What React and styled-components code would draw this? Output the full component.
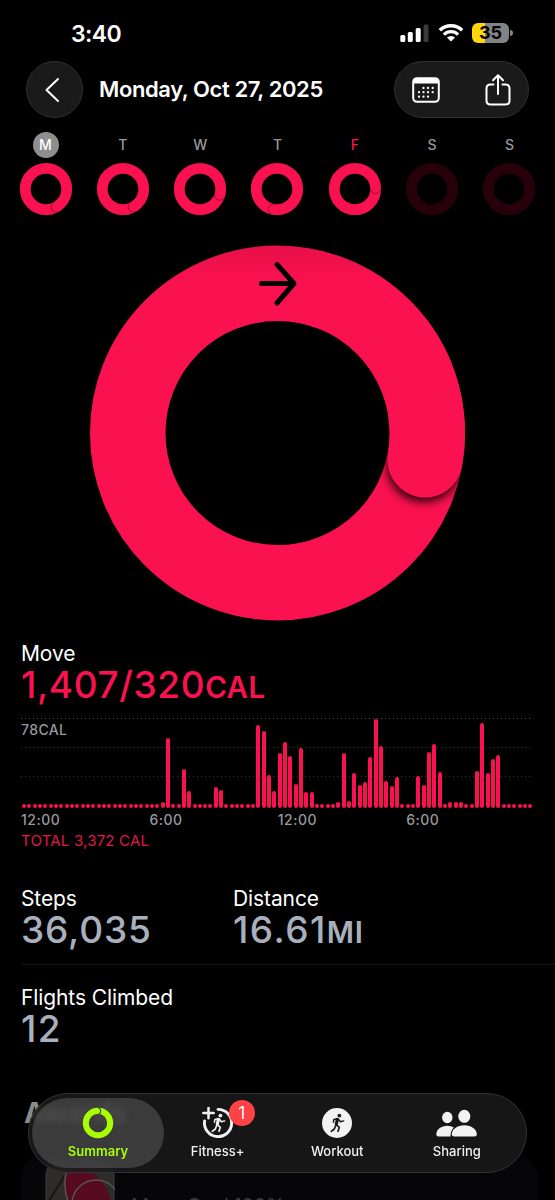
import React from "react";
import styled, { createGlobalStyle, css } from "styled-components";

const PINK = "#fa114f";
const GREY = "#98989d";

const DAYS = [
    { label: "M", state: "selected", cap: 150 },
    { label: "T", cap: 150 },
    { label: "W", cap: 107 },
    { label: "T", cap: 190 },
    { label: "F", state: "today", cap: 88 },
    { label: "S", state: "empty" },
    { label: "S", state: "empty" },
];

// quarter hour bars, heights in px (4 = nothing burned)
const CALORIES = [
    ...Array(26).fill(4),
    6, 70, 4, 4, 39, 17, 4, 4, 4, 4, 21, 18, 4, 4, 4, 4, 4, 4, 83, 77, 33, 17,
    55, 66, 52, 24, 60, 16, 16, 4, 4, 4, 4, 6, 55, 7, 35, 23, 26, 51, 89, 62,
    27, 22, 31, 4, 4, 4, 32, 23, 56, 64, 36, 4, 6, 6, 6, 4, 4, 37, 85, 35, 49,
    53, 4, 4, 4, 4, 4, 4,
];

const pointAt = (deg, r, c) => {
    const a = ((deg - 90) * Math.PI) / 180;
    return [c + r * Math.cos(a), c + r * Math.sin(a)];
};

const SmallRing = ({ state, cap }) => {
    if (state === "empty") {
        return (
            <svg width="54" height="54" viewBox="0 0 54 54">
                <circle cx="27" cy="27" r="20.7" fill="none" stroke="#27000b" strokeWidth="10.8" />
            </svg>
        );
    }
    const [x, y] = pointAt(cap, 20.7, 27);
    return (
        <svg width="54" height="54" viewBox="0 0 54 54">
            <circle cx="27" cy="27" r="20.7" fill="none" stroke={PINK} strokeWidth="10.8" />
            <g transform={`translate(${x} ${y}) rotate(${cap})`}>
                <path d="M0 -5.2A5.2 5.2 0 0 1 0 5.2" fill="none" stroke="#8d0a30" strokeWidth="0.9" opacity="0.85" />
            </g>
        </svg>
    );
};

const BigRing = () => {
    const [x, y] = pointAt(100.4, 150, 190);
    return (
        <svg width="381" height="380" viewBox="-0.5 0 381 380">
            <defs>
                <clipPath id="band">
                    <path clipRule="evenodd" d="M190 2.5a187.5 187.5 0 1 0 .01 0ZM190 78a112 112 0 1 0 .01 0Z" />
                </clipPath>
                <filter id="soft" x="-50%" y="-50%" width="200%" height="200%">
                    <feGaussianBlur stdDeviation="5" />
                </filter>
                <linearGradient id="shade" x1="0" y1="0" x2="0" y2="1">
                    <stop offset="0" stopColor="#000" stopOpacity="0.08" />
                    <stop offset="1" stopColor="#000" stopOpacity="0" />
                </linearGradient>
            </defs>
            <circle cx="190" cy="190" r="149.75" fill="none" stroke={PINK} strokeWidth="75.5" />
            <g clipPath="url(#band)">
                <circle cx={x - 1} cy={y + 5} r="37" fill="#000" opacity="0.85" filter="url(#soft)" />
                <rect x="90" y="2" width="200" height="34" fill="url(#shade)" />
            </g>
            <path
                d={`M310 100A150 150 0 0 1 ${x} ${y}`}
                fill="none"
                stroke={PINK}
                strokeWidth="75"
                strokeLinecap="round"
            />
            <path d="M174 40.5H206M189.5 21.500L206.5 40.5L189.5 60" fill="none" stroke="#000" strokeWidth="5" strokeLinecap="round" strokeLinejoin="round" />
        </svg>
    );
};

const SignalIcon = () => (
    <svg width="29" height="19" viewBox="0 0 29 19">
        <rect x="0.3" y="11" width="5" height="7" rx="1.5" fill="#fff" />
        <rect x="7.8" y="8" width="5" height="10" rx="1.5" fill="#fff" />
        <rect x="15.7" y="4" width="5" height="14" rx="1.5" fill="#fff" />
        <rect x="23.5" y="0.5" width="5" height="17.5" rx="1.5" fill="#3b3b3b" />
    </svg>
);

const WifiIcon = () => (
    <svg width="26" height="20" viewBox="0 0 26 20">
        <g fill="none" stroke="#fff" strokeWidth="3.3">
            <path d="M1.8 7.3A16 16 0 0 1 24.2 7.3" />
            <path d="M5.9 11.6A10.2 10.2 0 0 1 20.1 11.6" />
        </g>
        <path d="M13 18.6L8.9 14.6A5.9 5.9 0 0 1 17.1 14.6Z" fill="#fff" />
    </svg>
);

const CalendarIcon = () => (
    <svg width="30" height="28" viewBox="0 0 30 28">
        <rect x="2.2" y="2.2" width="25.6" height="23.6" rx="3.8" fill="none" stroke="#fff" strokeWidth="2" />
        <path d="M2 7.5V5.5Q2 2 5.5 2H24.5Q28 2 28 5.5V7.5Z" fill="#fff" />
        <g fill="#fff">
            {[
                [12.5, 12], [17, 12], [21.7, 12],
                [8, 16.2], [12.5, 16.2], [17, 16.2], [21.7, 16.2],
                [8, 20.7], [12.5, 20.7], [17, 20.7],
            ].map(([cx, cy]) => (
                <circle key={`${cx}-${cy}`} cx={cx} cy={cy} r="1.15" />
            ))}
        </g>
    </svg>
);

const ShareIcon = () => (
    <svg width="28" height="34" viewBox="0 0 28 34">
        <g fill="none" stroke="#fff" strokeWidth="2" strokeLinecap="round" strokeLinejoin="round">
            <path d="M9.5 11.5H6.5Q2.5 11.5 2.5 15.5V27.5Q2.5 31.5 6.5 31.5H21.5Q25.5 31.5 25.5 27.5V15.5Q25.5 11.5 21.5 11.5H18.5" />
            <path d="M14 21V2.5M9 7.2L14 2.2L19 7.2" />
        </g>
    </svg>
);

const Runner = ({ color }) => (
    <g fill="none" stroke={color} strokeLinecap="round" strokeLinejoin="round">
        <circle cx="17.4" cy="7.6" r="1.9" fill={color} stroke="none" />
        <path d="M15.4 11.5L14.3 16.2" strokeWidth="3.2" />
        <path d="M15.2 10.7L11.9 11.4L11.4 14.2M16.3 11L18.4 13.8L21.7 12.9" strokeWidth="1.5" />
        <path d="M14.5 16.8L17.3 19.3L16 23.2M13.6 17.8L12.3 21L9.3 23.3" strokeWidth="1.7" />
    </g>
);

const SummaryIcon = () => (
    <svg width="32" height="32" viewBox="0 0 32 32">
        <circle cx="16" cy="16" r="12.2" fill="none" stroke="#a8ff04" strokeWidth="6" />
        <path d="M16.5 0.6Q20.5 3.5 17.3 7" fill="none" stroke="#3d3d3d" strokeWidth="1.2" />
    </svg>
);

const FitnessIcon = () => (
    <svg width="32" height="32" viewBox="0 0 32 32">
        <path d="M16 2.4A13.6 13.6 0 1 1 2.6 14" fill="none" stroke="#f2f2f2" strokeWidth="2.9" strokeLinecap="round" />
        <path d="M6.5 0.8V11.2M1.3 6H11.7" stroke="#f2f2f2" strokeWidth="2.5" strokeLinecap="round" />
        <g transform="translate(1 1)">
            <Runner color="#f2f2f2" />
        </g>
    </svg>
);

const WorkoutIcon = () => (
    <svg width="32" height="32" viewBox="0 0 32 32">
        <circle cx="16" cy="16" r="15" fill="#f2f2f2" />
        <g transform="translate(1 1)">
            <Runner color="#1b1b1b" />
        </g>
    </svg>
);

const SharingIcon = () => (
    <svg width="42" height="32" viewBox="0.7 0 42 32">
        <g fill="#f2f2f2">
            <ellipse cx="12" cy="10.5" rx="5.2" ry="5.8" />
            <path d="M1 27.5C1 22.5 6 18.7 12 18.7Q16 18.7 18.5 20.5Q15.2 23.6 15.2 29.5H3Q1 29.5 1 27.5Z" />
            <ellipse cx="29" cy="9.3" rx="6" ry="6.5" />
            <path d="M16.5 27.2C16.5 22.2 22 18.2 29 18.2C36 18.2 41.5 22.2 41.5 27.2Q41.5 29.5 39.2 29.5H18.8Q16.5 29.5 16.5 27.2Z" />
        </g>
    </svg>
);

const AwardBadge = () => (
    <svg width="70" height="50" viewBox="0 0 70 50">
        <rect x="1" y="1" width="68" height="68" rx="12" fill="#2d2c29" stroke="#3d3c3a" />
        <path d="M21 14Q21 8 31 8H39Q63 16 68 50H27Q18 32 21 14Z" fill="#560b20" />
        <path d="M4 40L20 14" fill="none" stroke="#171615" strokeWidth="2" />
        <path d="M21 12Q17 30 27 50" fill="none" stroke="#59534f" strokeWidth="1.5" />
        <circle cx="51" cy="43" r="24" fill="none" stroke="#59534f" strokeWidth="1.5" />
    </svg>
);

const TABS = [
    { label: "Summary", Icon: SummaryIcon, active: true },
    { label: "Fitness+", Icon: FitnessIcon, badge: "1" },
    { label: "Workout", Icon: WorkoutIcon },
    { label: "Sharing", Icon: SharingIcon },
];

const App = () => {
    return (
        <Screen>
            <GlobalStyle />
            <StatusBar>
                <Clock>3:40</Clock>
                <StatusIcons>
                    <SignalIcon />
                    <WifiIcon />
                    <Battery>35</Battery>
                </StatusIcons>
            </StatusBar>

            <Header>
                <BackButton>
                    <svg width="16" height="26" viewBox="0 0 16 26">
                        <path d="M14 2L2.5 13L14 24" fill="none" stroke="#fff" strokeWidth="2" strokeLinecap="round" strokeLinejoin="round" />
                    </svg>
                </BackButton>
                <Title>Monday, Oct 27, 2025</Title>
                <Actions>
                    <CalendarIcon />
                    <ShareIcon />
                </Actions>
            </Header>

            <Week>
                {DAYS.map((day, i) => (
                    <Day key={i}>
                        <DayLabel $state={day.state}>{day.label}</DayLabel>
                        <SmallRing {...day} />
                    </Day>
                ))}
            </Week>

            <RingArea>
                <BigRing />
            </RingArea>

            <Move>
                <Label>Move</Label>
                <Value $color={PINK} $spacing="0.6px">
                    1,407/320<Unit $spacing="0.4px">CAL</Unit>
                </Value>
                <Chart>
                    <GridLine $bright>
                        <Peak>78CAL</Peak>
                    </GridLine>
                    <GridLine />
                    <GridLine />
                    <Bars>
                        {CALORIES.map((h, i) => (
                            <Bar key={i} style={{ height: h }} />
                        ))}
                    </Bars>
                </Chart>
                <Hours>
                    <span>12:00</span>
                    <span>6:00</span>
                    <span>12:00</span>
                    <span>6:00</span>
                </Hours>
                <Total>TOTAL 3,372 CAL</Total>
            </Move>

            <StatsRow>
                <Stat>
                    <Label>Steps</Label>
                    <Value $spacing="0.9px">36,035</Value>
                </Stat>
                <Stat>
                    <Label>Distance</Label>
                    <Value $spacing="1.5px">
                        16.61<Unit $spacing="0.8px">MI</Unit>
                    </Value>
                </Stat>
            </StatsRow>
            <StatsRow $last>
                <Stat>
                    <Label>Flights Climbed</Label>
                    <Value $spacing="1.5px">12</Value>
                </Stat>
            </StatsRow>

            <AwardsTitle>Awards</AwardsTitle>
            <AwardCard>
                <AwardBadge />
                <AwardName>Move Goal 100%</AwardName>
            </AwardCard>

            <TabBar>
                {TABS.map(({ label, Icon, active, badge }) => (
                    <Tab key={label} $active={active}>
                        <Icon />
                        <TabLabel $active={active}>{label}</TabLabel>
                        {badge && <Badge>{badge}</Badge>}
                    </Tab>
                ))}
            </TabBar>
        </Screen>
    );
};

const GlobalStyle = createGlobalStyle`
  body {
    margin: 0;
    background: #000;
  }

  * {
    box-sizing: border-box;
  }

  svg {
    display: block;
    flex-shrink: 0;
  }
`;

const Screen = styled.div`
  position: relative;
  display: flex;
  flex-direction: column;
  width: 555px;
  height: 1200px;
  overflow: hidden;
  background: #000;
  color: #fff;
  font-family: Inter, "Liberation Sans", sans-serif;
  white-space: nowrap;
`;

const StatusBar = styled.div`
  display: flex;
  flex-shrink: 0;
  justify-content: space-between;
  height: 61px;
  padding: 19px 42px 0 71px;
`;

const Clock = styled.div`
  font-size: 23px;
  line-height: 30px;
  font-weight: 600;
  letter-spacing: -0.6px;
`;

const StatusIcons = styled.div`
  display: flex;
  align-items: center;
  height: 28px;
  gap: 8.5px;
`;

const Battery = styled.div`
  position: relative;
  width: 37px;
  height: 20px;
  margin-right: 4px;
  border-radius: 6px;
  background: linear-gradient(90deg, #ffd60a 13px, #838386 13px);
  color: #000;
  font-size: 18px;
  line-height: 20px;
  font-weight: 700;
  text-align: center;

  &::after {
    content: "";
    position: absolute;
    left: 38px;
    top: 7px;
    width: 2.5px;
    height: 6px;
    border-radius: 0 3px 3px 0;
    background: #838386;
  }
`;

const Header = styled.div`
  display: flex;
  flex-shrink: 0;
  align-items: center;
  height: 57px;
  padding: 0 26px;
`;

const glass = css`
  background: #1a1a1a;
  border: 1px solid #303030;
`;

const BackButton = styled.div`
  ${glass}
  display: flex;
  align-items: center;
  justify-content: center;
  width: 57px;
  height: 57px;
  padding-right: 5px;
  border-radius: 50%;
`;

const Title = styled.div`
  margin-left: 16px;
  padding-bottom: 2px;
  font-size: 22px;
  line-height: 28px;
  font-weight: 600;
  letter-spacing: -0.4px;
`;

const Actions = styled.div`
  ${glass}
  display: flex;
  align-items: center;
  justify-content: space-between;
  width: 135px;
  height: 57px;
  margin-left: auto;
  padding: 0 16px;
  border-radius: 29px;
`;

const Week = styled.div`
  display: flex;
  flex-shrink: 0;
  justify-content: space-between;
  height: 99px;
  padding: 14px 18.5px 0;
`;

const Day = styled.div`
  display: flex;
  flex-direction: column;
  align-items: center;
  gap: 4px;
  width: 54px;
`;

const DayLabel = styled.div`
  width: 26px;
  height: 26px;
  border-radius: 50%;
  background: ${({ $state }) => ($state === "selected" ? "#8e8e8e" : "none")};
  color: ${({ $state }) => ($state === "selected" ? "#fff" : $state === "today" ? PINK : GREY)};
  font-size: 14px;
  line-height: 26px;
  font-weight: 500;
  text-align: center;
`;

const RingArea = styled.div`
  display: flex;
  flex-shrink: 0;
  justify-content: center;
  padding-top: 26px;
`;

const Move = styled.section`
  display: flex;
  flex-shrink: 0;
  flex-direction: column;
  height: 243px;
  padding: 18px 21px 0;
`;

const Label = styled.div`
  font-size: 21px;
  line-height: 26px;
  letter-spacing: -0.1px;
`;

const Value = styled.div`
  color: ${({ $color }) => $color || "#a9b0bd"};
  font-size: 37px;
  line-height: 36px;
  font-weight: 500;
  letter-spacing: ${({ $spacing }) => $spacing};
`;

const Unit = styled.span`
  font-size: 29.5px;
  font-weight: 600;
  letter-spacing: ${({ $spacing }) => $spacing};
`;

const Chart = styled.div`
  position: relative;
  height: 94px;
  margin: 13px 1px 0 0;
`;

const GridLine = styled.div`
  height: 29px;
  background: repeating-linear-gradient(90deg, ${({ $bright }) => ($bright ? "#555" : "#363636")} 0 1.5px, transparent 1.5px 4px) top / 100% 1px no-repeat;
`;

const Peak = styled.div`
  padding-top: 4px;
  color: ${GREY};
  font-size: 14px;
  line-height: 16px;
  font-weight: 500;
  letter-spacing: 0.4px;
`;

const Bars = styled.div`
  position: absolute;
  inset: 0;
  display: flex;
  align-items: flex-end;
  justify-content: space-between;
  padding: 0 0 4px 1px;
`;

const Bar = styled.div`
  width: 4px;
  border-radius: 2px;
  background: ${PINK};
`;

const Hours = styled.div`
  display: grid;
  grid-template-columns: repeat(4, 128.4px);
  color: ${GREY};
  font-size: 14px;
  line-height: 16px;
  font-weight: 500;
  letter-spacing: 0.5px;
`;

const Total = styled.div`
  margin-top: 4px;
  color: #e0164b;
  font-size: 15px;
  line-height: 18px;
  letter-spacing: 0.2px;
`;

const StatsRow = styled.div`
  display: grid;
  grid-template-columns: 212px 1fr;
  flex-shrink: 0;
  height: ${({ $last }) => ($last ? "134px" : "99px")};
  margin-left: 21px;
  padding-top: 20px;
  border-bottom: ${({ $last }) => ($last ? "none" : "1px solid #161616")};
`;

const Stat = styled.div``;

const AwardsTitle = styled.div`
  flex-shrink: 0;
  height: 54px;
  padding-left: 24px;
  color: #8a8a8a;
  font-size: 28px;
  line-height: 28px;
  font-weight: 700;
`;

const AwardCard = styled.div`
  display: flex;
  flex-shrink: 0;
  gap: 16px;
  height: 80px;
  margin: 0 17px 0 21px;
  padding: 8px 24px;
  border-radius: 26px;
  background: #060608;
`;

const AwardName = styled.div`
  padding-top: 32px;
  color: #3c3c3c;
  font-size: 20px;
  line-height: 26px;
  letter-spacing: -0.4px;
`;

const TabBar = styled.nav`
  position: absolute;
  left: 28px;
  top: 1093px;
  display: flex;
  width: 499px;
  height: 80px;
  padding: 4px 3px;
  border: 1px solid #333;
  border-radius: 40px;
  background: rgba(27, 27, 27, 0.82);
  backdrop-filter: blur(3px);
`;

const Tab = styled.div`
  position: relative;
  display: flex;
  flex-direction: column;
  align-items: center;
  width: 132px;
  height: 70px;
  margin-right: -12.4px;
  padding-top: 9px;
  border-radius: 35px;
  background: ${({ $active }) => ($active ? "rgba(120, 120, 120, 0.38)" : "none")};
`;

const TabLabel = styled.div`
  margin-top: 4px;
  color: ${({ $active }) => ($active ? "#a8ff04" : "#f0f0f0")};
  font-size: 13px;
  line-height: 16px;
  font-weight: ${({ $active }) => ($active ? 600 : 500)};
`;

const Badge = styled.div`
  position: absolute;
  left: 77px;
  top: 2px;
  width: 26px;
  height: 26px;
  border-radius: 50%;
  background: #ff4245;
  color: #fff;
  font-size: 17px;
  line-height: 26px;
  text-align: center;
`;

export default App;
